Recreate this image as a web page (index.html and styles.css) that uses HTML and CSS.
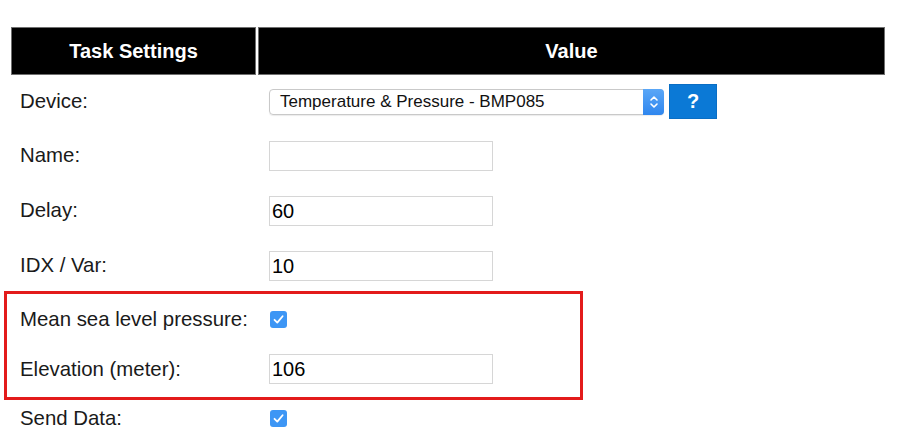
FILE: index.html
```html
<!DOCTYPE html>
<html>
<head>
<meta charset="utf-8">
<link rel="stylesheet" href="styles.css">
</head>
<body>
<div class="page">
  <div class="head">
    <div class="hcell hleft">Task Settings</div>
    <div class="hcell hright">Value</div>
  </div>
  <div class="row r-device">
    <div class="label">Device:</div>
    <div class="value">
      <div class="select">
        <span class="select-text">Temperature &amp; Pressure - BMP085</span>
        <span class="stepper">
          <svg width="10" height="16" viewBox="0 0 10 16"><path d="M2 6 L5 3 L8 6 M2 10 L5 13 L8 10" fill="none" stroke="#fff" stroke-width="1.6" stroke-linecap="round" stroke-linejoin="round"/></svg>
        </span>
      </div>
      <div class="help">?</div>
    </div>
  </div>
  <div class="row r-std">
    <div class="label">Name:</div>
    <div class="value"><div class="input"></div></div>
  </div>
  <div class="row r-std">
    <div class="label">Delay:</div>
    <div class="value"><div class="input">60</div></div>
  </div>
  <div class="row r-std">
    <div class="label">IDX / Var:</div>
    <div class="value"><div class="input">10</div></div>
  </div>
  <div class="row r-mean">
    <div class="label">Mean sea level pressure:</div>
    <div class="value"><span class="check"><svg width="17" height="17" viewBox="0 0 17 17"><path d="M4.5 8.8 L7.3 11.6 L12.6 5.2" fill="none" stroke="#fff" stroke-width="1.8" stroke-linecap="round" stroke-linejoin="round"/></svg></span></div>
  </div>
  <div class="row r-elev">
    <div class="label">Elevation (meter):</div>
    <div class="value"><div class="input">106</div></div>
  </div>
  <div class="row r-send">
    <div class="label">Send Data:</div>
    <div class="value"><span class="check"><svg width="17" height="17" viewBox="0 0 17 17"><path d="M4.5 8.8 L7.3 11.6 L12.6 5.2" fill="none" stroke="#fff" stroke-width="1.8" stroke-linecap="round" stroke-linejoin="round"/></svg></span></div>
  </div>
  <div class="highlight"></div>
</div>
</body>
</html>
```
FILE: styles.css
```css
html, body {
  margin: 0;
  padding: 0;
  background: #fff;
}
body {
  font-family: "Liberation Sans", Arial, Helvetica, sans-serif;
  color: #111;
  width: 900px;
  height: 440px;
  overflow: hidden;
}
.page {
  position: relative;
  padding: 27px 0 0 11px;
}
.head {
  display: flex;
  gap: 2px;
  height: 48px;
}
.hcell {
  background: #000;
  border: 1px solid #6f6f6f;
  box-sizing: border-box;
  color: #fff;
  font-weight: bold;
  font-size: 20px;
  display: flex;
  align-items: center;
  justify-content: center;
}
.hleft { width: 245px; }
.hright { width: 627px; }
.row {
  display: flex;
  align-items: center;
}
.r-device { height: 53px; }
.r-std { height: 55px; }
.r-mean { height: 52px; }
.r-elev { height: 48px; }
.r-send { height: 51px; }
.label {
  width: 258px;
  padding-left: 9px;
  box-sizing: border-box;
  font-size: 20.4px;
  color: #1a1a1a;
}
.value {
  display: flex;
  align-items: center;
  gap: 5px;
}
.input {
  width: 224px;
  height: 30px;
  border: 1px solid #d6d6d6;
  box-sizing: border-box;
  font-size: 20px;
  line-height: 28px;
  padding-left: 2px;
  color: #000;
}
.select {
  width: 395px;
  height: 26px;
  border: 1px solid #c9c9c9;
  border-radius: 4px;
  box-sizing: border-box;
  display: flex;
  align-items: center;
  justify-content: space-between;
  font-size: 17px;
  color: #111;
  box-shadow: 0 1px 1px rgba(0,0,0,0.08);
}
.select-text {
  padding-left: 10px;
}
.stepper {
  width: 21px;
  height: 26px;
  margin: -1px -1px -1px 0;
  background: linear-gradient(#5aa7f7, #2f86ee);
  border-radius: 0 4px 4px 0;
  display: flex;
  align-items: center;
  justify-content: center;
}
.help {
  width: 48px;
  height: 35px;
  background: #0b79d6;
  border: 1px solid #0a6ec4;
  box-sizing: border-box;
  color: #fff;
  font-weight: bold;
  font-size: 20px;
  display: flex;
  align-items: center;
  justify-content: center;
}
.check {
  display: inline-flex;
  width: 17px;
  height: 17px;
  margin-left: 1px;
  border-radius: 3px;
  background: #3d96f5;
}
.highlight {
  position: absolute;
  left: 4px;
  top: 291px;
  width: 579px;
  height: 109px;
  border: 3px solid #e31b1b;
  box-sizing: border-box;
}
```
